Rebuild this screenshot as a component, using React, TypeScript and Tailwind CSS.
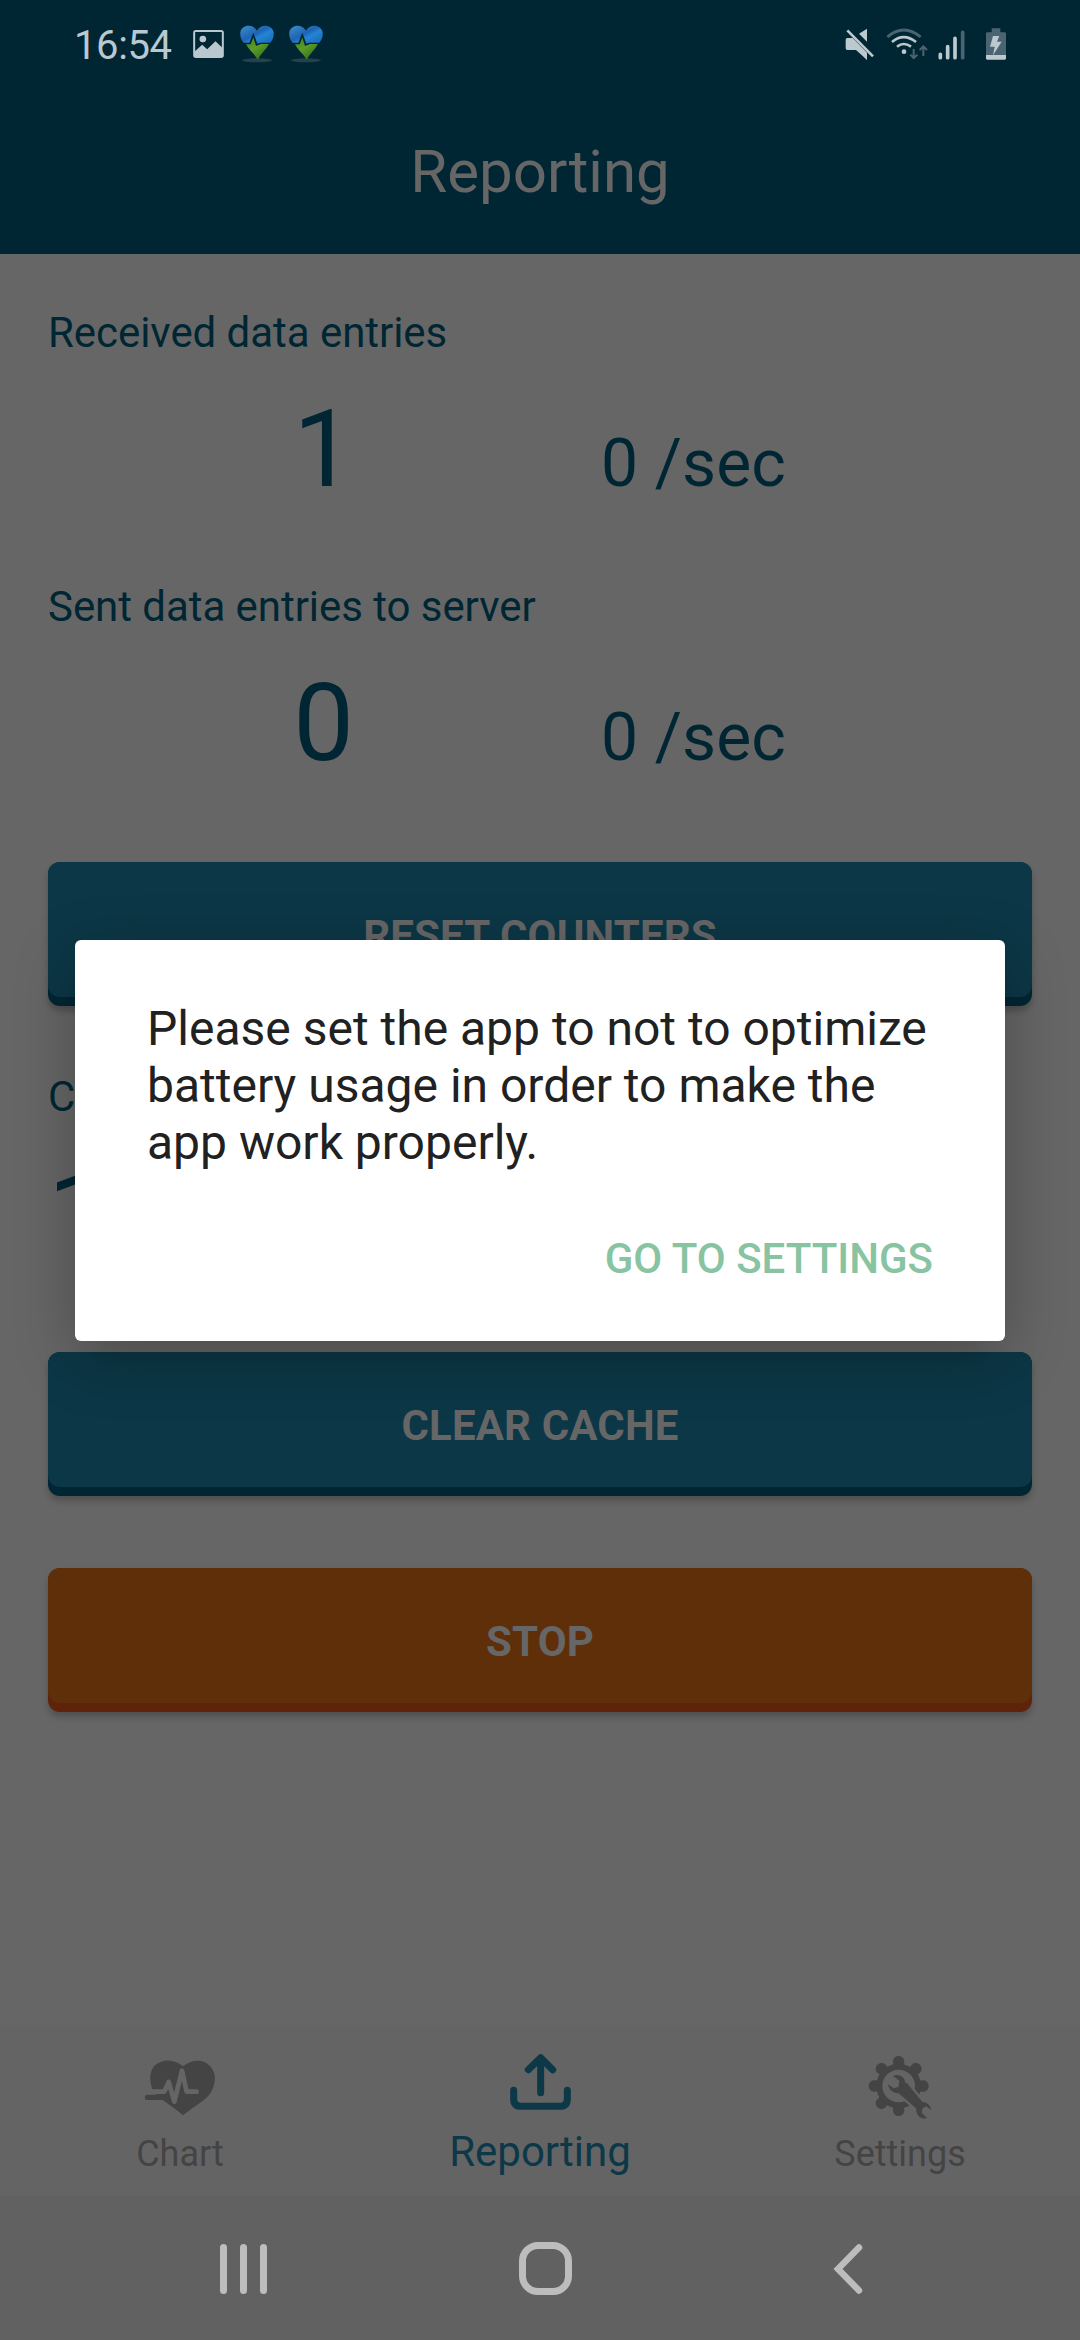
import type { ReactNode } from "react";

function ImageIcon() {
  return (
    <svg className="h-[28px] w-[31px]" viewBox="399 90 92 84">
      <path
        fill="#b9c7ce"
        fillRule="evenodd"
        d="M407 90H483Q491 90 491 98V166Q491 174 483 174H407Q399 174 399 166V98Q399 90 407 90ZM405 96V153L426 134L441 148L466 124L485 142V96Z"
      />
      <circle cx="428" cy="117" r="10" fill="#b9c7ce" />
    </svg>
  );
}

function HeartAppIcon({ id }: { id: string }) {
  return (
    <svg className="h-[38px] w-[34px]" viewBox="539 75 102 114">
      <defs>
        <linearGradient id={`${id}-blue`} x1="0" y1="0" x2="1" y2="1">
          <stop offset="0" stopColor="#3f8fcb" />
          <stop offset="0.45" stopColor="#1d64b4" />
          <stop offset="0.6" stopColor="#2485d2" />
          <stop offset="1" stopColor="#1566b8" />
        </linearGradient>
        <linearGradient id={`${id}-green`} x1="0" y1="0" x2="0.7" y2="1">
          <stop offset="0" stopColor="#3f8020" />
          <stop offset="0.5" stopColor="#5d9c26" />
          <stop offset="1" stopColor="#2f701d" />
        </linearGradient>
      </defs>
      <ellipse cx="590" cy="181" rx="45" ry="6" fill="#24414c" />
      <path
        fill={`url(#${id}-blue)`}
        d="M550 128C542 120 539 108 540 97C543 75 577 69 590 92C603 69 637 75 640 98C641 109 637 121 630 128H599L591 131L579 98L567 128Z"
      />
      <path
        fill={`url(#${id}-green)`}
        d="M557 133H571L579 112L587 138L602 132H626C616 150 602 161 592 179C582 161 566 151 557 133Z"
      />
    </svg>
  );
}

function MutedIcon() {
  return (
    <svg className="h-[32px] w-[30px]" viewBox="75 84 90 96">
      <path fill="#bcc9cf" d="M77 119Q77 114 82 114H98L141 160V180L112 150H82Q77 150 77 145ZM141 86V125L117 101Z" />
      <path fill="#bcc9cf" d="M96 114L141 158V179L108 150Z" />
      <path stroke="#012634" strokeWidth="6" d="M97 88L165 159" />
      <path stroke="#bcc9cf" strokeWidth="8" d="M82 91L159 169" />
    </svg>
  );
}

function WifiIcon() {
  return (
    <svg className="h-[32px] w-[42px]" viewBox="198 84 126 96" fill="none">
      <path stroke="#4a6471" strokeWidth="8" d="M202 111Q251 69 302 111" />
      <path stroke="#bcc9cf" strokeWidth="8" d="M216 126Q251 97 288 126M231 140Q251 124 273 140" />
      <circle cx="252" cy="155" r="7" fill="#bcc9cf" />
      <path stroke="#4a6471" strokeWidth="6" d="M281 147V174M271 164L281 174L292 164M310 168V140M299 150L310 139L321 150" />
    </svg>
  );
}

function SignalIcon() {
  return (
    <svg className="h-[30px] w-[28px]" viewBox="354 90 84 90" strokeWidth="11" strokeLinecap="round">
      <path stroke="#bcc9cf" d="M361 163V173M383 140V173M405 115V173" />
      <path stroke="#4a6471" d="M428 97V173" />
    </svg>
  );
}

function BatteryIcon() {
  return (
    <svg className="h-[32px] w-[20px]" viewBox="498 84 60 96">
      <path fill="#4a6471" d="M515 85H541V97H554Q558 97 558 101V165H498V101Q498 97 502 97H515Z" />
      <path fill="#bcc9cf" d="M498 165H558V175Q558 179 554 179H502Q498 179 498 175Z" />
      <path fill="#bcc9cf" d="M519 108H538L531 125H545L519 166L524 140H510Z" />
    </svg>
  );
}

function ChartIcon() {
  return (
    <svg className="h-20 w-[100px]" viewBox="90 135 300 240">
      <path
        fill="#444444"
        d="M157 268C146 236 150 211 165 196C190 174 226 178 249 199C274 178 310 176 330 198C351 220 350 258 325 288C308 306 275 324 249 346C230 329 209 316 188 300H142A7.500 7.500 0 0 1 142 285H170Z"
      />
      <path
        d="M150 275H193L206 246L223 305L246 212L260 275H290"
        fill="none"
        stroke="#656565"
        strokeWidth="14"
        strokeLinecap="round"
        strokeLinejoin="round"
      />
      <path d="M143 292H190" stroke="#444444" strokeWidth="15" strokeLinecap="round" />
    </svg>
  );
}

function UploadIcon() {
  return (
    <svg
      className="h-20 w-[100px]"
      viewBox="210 135 300 240"
      fill="none"
      stroke="#0d3848"
      strokeWidth="21"
      strokeLinecap="round"
      strokeLinejoin="round"
    >
      <path d="M362 278V174M325 209L362 173L398 209M281 271V297Q281 319 303 319H420Q442 319 442 297V271" />
    </svg>
  );
}

const toothAngles = [0, 90, 135, 180, 225, 270, 315];

function GearIcon() {
  return (
    <svg className="h-20 w-[100px]" viewBox="150 135 300 240">
      <g fill="#444444">
        {toothAngles.map((a) => (
          <path
            key={a}
            transform={`rotate(${a} 296 258)`}
            d="M352 236Q356 244 368 241C378 240 386 248 386 258C386 268 378 276 368 275Q356 272 352 280Z"
          />
        ))}
      </g>
      <circle cx="296" cy="258" r="58" fill="none" stroke="#444444" strokeWidth="18" />
      <path
        fill="#444444"
        stroke="#646464"
        strokeWidth="14"
        paintOrder="stroke"
        strokeLinejoin="round"
        d="M318 246L368 307L352 328L296 280Z"
      />
      <path
        fill="#444444"
        d="M279 228C298 219 319 233 315 256L361 307C375 302 391 313 394 330L379 319L368 325L365 338L381 354C364 360 347 348 349 325L301 279C283 283 267 272 264 253L281 265L296 260L298 242Z"
      />
    </svg>
  );
}

function Counter({ label, value, rate }: { label: string; value: string; rate: string }) {
  return (
    <section className="h-[274px]">
      <h2 className="text-[42px] leading-[50px] tracking-[-0.05px]">{label}</h2>
      <div className="mt-[27px] flex items-baseline">
        <span className="w-[551px] text-center text-[108px] leading-[128px]">{value}</span>
        <span className="ml-[2px] text-[66px] leading-[78px] tracking-[0.1px]">{rate}</span>
      </div>
    </section>
  );
}

function ActionButton({ children, tone }: { children: ReactNode; tone: "blue" | "orange" }) {
  const base = tone === "blue" ? "bg-[#002633]" : "bg-[#5f230b]";
  const face = tone === "blue" ? "bg-[#0c3746]" : "bg-[#5f2f0a]";
  return (
    <button className={`block h-36 w-full shrink-0 rounded-[12px] pb-[9px] shadow-[0_5px_6px_rgba(0,0,0,0.22)] ${base}`}>
      <span
        className={`flex h-full items-center justify-center rounded-[12px] pt-[12px] text-[42px] leading-[50px] font-bold tracking-[0.15px] text-[#666666] ${face}`}
      >
        {children}
      </span>
    </button>
  );
}

function Tab({ icon, label, active = false }: { icon: ReactNode; label: string; active?: boolean }) {
  return (
    <div className="flex flex-col items-center pt-[20px]">
      {icon}
      <span
        className={
          active
            ? "mt-[2px] text-[42px] leading-[50px] text-[#0d3848]"
            : "mt-[4px] text-[36px] leading-[50px] text-[#444444]"
        }
      >
        {label}
      </span>
    </div>
  );
}

export default function App() {
  return (
    <div className="relative flex h-[2340px] w-[1080px] flex-col overflow-hidden bg-[#666666] font-['Roboto',sans-serif] text-[#002633]">
      <header className="h-[254px] shrink-0 bg-[#002634]">
        <div className="flex h-[90px] justify-between pr-[74px] pl-[74px]">
          <div className="flex items-start">
            <span className="mt-[22px] w-[119px] text-[40px] leading-[48px] tracking-[-0.4px] text-[#bac8cf]">16:54</span>
            <div className="mt-[30px]">
              <ImageIcon />
            </div>
            <div className="mt-[25px] ml-[16px] flex gap-[15px]">
              <HeartAppIcon id="first" />
              <HeartAppIcon id="second" />
            </div>
          </div>
          <div className="flex items-start pt-[28px]">
            <MutedIcon />
            <div className="ml-[11px]">
              <WifiIcon />
            </div>
            <div className="mt-[2px] ml-[10px]">
              <SignalIcon />
            </div>
            <div className="ml-[20px]">
              <BatteryIcon />
            </div>
          </div>
        </div>
        <h1 className="text-center text-[60px] leading-[164px] text-[#666666]">Reporting</h1>
      </header>

      <main className="flex-1 px-12 pt-[54px]">
        <Counter label="Received data entries" value="1" rate="0 /sec" />
        <Counter label="Sent data entries to server" value="0" rate="0 /sec" />
        <div className="mt-[6px]">
          <ActionButton tone="blue">RESET COUNTERS</ActionButton>
        </div>
        <section className="mt-[66px]">
          <h2 className="text-[42px] leading-[50px]">C</h2>
          <p className="mt-[26px] text-[108px] leading-[128px]">1</p>
        </section>
        <div className="mt-[76px] flex flex-col gap-[72px]">
          <ActionButton tone="blue">CLEAR CACHE</ActionButton>
          <ActionButton tone="orange">STOP</ActionButton>
        </div>
      </main>

      <nav className="grid h-[171px] shrink-0 grid-cols-3 bg-[#646464]">
        <Tab icon={<ChartIcon />} label="Chart" />
        <Tab icon={<UploadIcon />} label="Reporting" active />
        <Tab icon={<GearIcon />} label="Settings" />
      </nav>

      <footer className="flex h-36 shrink-0 items-center justify-between bg-[#616161] pt-px pr-[217px] pl-[220px]">
        <div className="flex gap-[13px]">
          <span className="h-[50px] w-[7px] rounded-full bg-[#bdbdbd]" />
          <span className="h-[50px] w-[7px] rounded-full bg-[#bdbdbd]" />
          <span className="h-[50px] w-[7px] rounded-full bg-[#bdbdbd]" />
        </div>
        <span className="ml-[-9px] size-[53px] rounded-[19px] border-[7px] border-[#bdbdbd]" />
        <svg className="h-[52px] w-[30px]" viewBox="0 0 30 52" fill="none" stroke="#bdbdbd" strokeWidth="6.500" strokeLinecap="round">
          <path d="M26 4.500L5 26L26 47.500" />
        </svg>
      </footer>

      <div
        role="dialog"
        className="absolute top-[940px] left-[75px] flex h-[401px] w-[930px] flex-col rounded-[6px] bg-white px-[72px] shadow-[0_17px_60px_rgba(0,0,0,0.27)]"
      >
        <p className="mt-[60px] text-[48px] leading-[57px] text-[#212121]">
          Please set the app to not to optimize battery usage in order to make the app work properly.
        </p>
        <button className="mt-[63px] self-end text-[42px] leading-[50px] font-medium text-[#88c3a2]">GO TO SETTINGS</button>
      </div>
    </div>
  );
}
